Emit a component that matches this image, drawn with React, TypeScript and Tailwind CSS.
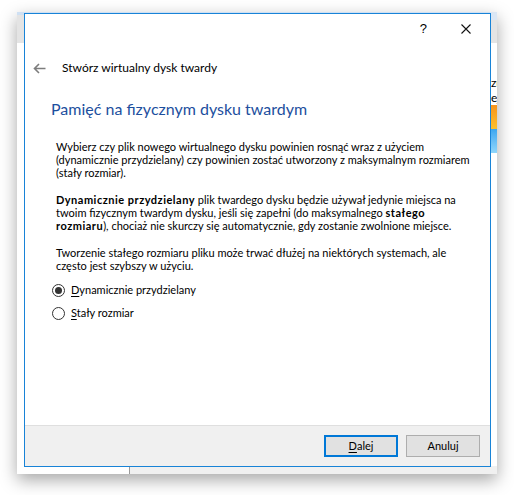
const font = "font-['Lato','Liberation_Sans',sans-serif]";

const Radio = ({ checked, label, u }: { checked?: boolean; label: string; u: string }) => (
  <div className="flex items-center h-[16px]">
    <div className="w-[13px] h-[13px] ml-[27px] rounded-full border border-[#333] bg-white flex items-center justify-center">
      {checked && <div className="w-[7px] h-[7px] rounded-full bg-[#333]" />}
    </div>
    <span className="ml-[6px] text-[11px] leading-[16px] text-black">
      <span className="underline underline-offset-2">{u}</span>
      {label}
    </span>
  </div>
);

const BackWindow = () => (
  <div className="absolute left-[17px] top-[12px] w-[480px] h-[462px] bg-white shadow-[0_6px_16px_rgba(0,0,0,0.35)] overflow-hidden">
    <div className="h-[31px] bg-[#e4e4e4] border-t-[3px] border-[#cfe0f3]" />
    {/* right strip fragments of the window behind */}
    <div className="absolute right-0 top-0 w-[7px] h-[8px] bg-[#dbe7f5]" />
    <div className="absolute right-[-6px] top-[63px] text-[12px] leading-[15px] text-black">
      <div>zu</div>
      <div>ej</div>
    </div>
    <div className="absolute right-0 top-[93px] w-[7px] h-[24px] bg-gradient-to-b from-[#f7941d] to-[#fbc02d]" />
    <div className="absolute right-0 top-[117px] w-[7px] h-[24px] bg-gradient-to-b from-[#3aa6f0] to-[#8fd6fb]" />
    <div className="absolute left-0 right-0 bottom-0 h-[8px] flex">
      <div className="w-[112px] bg-white" />
      <div className="w-px bg-[#9a9a9a]" />
      <div className="flex-1 bg-[#f0f0f0]" />
    </div>
  </div>
);

export default function App() {
  return (
    <div className={`relative w-[514px] h-[495px] bg-white overflow-hidden ${font}`}>
      <BackWindow />
      <div className="absolute left-[24px] top-[13px] w-[467px] h-[454px] border border-[#1883d7] bg-white flex flex-col">
        <div className="h-[30px] flex items-center justify-end shrink-0">
          <span className="text-[13px] text-black mr-[34px] font-['Liberation_Sans',sans-serif]">?</span>
          <svg width="10" height="10" viewBox="0 0 10 10" className="mr-[19px]">
            <path d="M0.5 0.5 L9.5 9.5 M9.5 0.5 L0.5 9.5" stroke="#111" strokeWidth="1.1" />
          </svg>
        </div>
        <div className="flex items-center h-[24px] mt-[12px]">
          <svg width="13" height="11" viewBox="0 0 13 11" className="ml-[8px]">
            <path d="M12.5 5.5 H1.5 M6 1 L1.5 5.5 L6 10" stroke="#7d7d7d" strokeWidth="1.6" fill="none" />
          </svg>
          <span className="ml-[16px] text-[12px] text-black">Stwórz wirtualny dysk twardy</span>
        </div>
        <h1 className="mt-[18px] ml-[26px] text-[16px] leading-[22px] text-[#1d4f9e]">
          Pamięć na fizycznym dysku twardym
        </h1>
        <div className="ml-[31px] text-[11px] leading-[13px] text-black whitespace-nowrap">
          <p className="mt-[20px]">
            Wybierz czy plik nowego wirtualnego dysku powinien rosnąć wraz z użyciem
            <br />
            (dynamicznie przydzielany) czy powinien zostać utworzony z maksymalnym rozmiarem
            <br />
            (stały rozmiar).
          </p>
          <p className="mt-[14px]">
            <b className="tracking-[0.5px]">Dynamicznie przydzielany</b> plik twardego dysku będzie używał jedynie miejsca na
            <br />
            twoim fizycznym twardym dysku, jeśli się zapełni (do maksymalnego <b className="tracking-[0.5px]">stałego</b>
            <br />
            <b className="tracking-[0.5px]">rozmiaru</b>), chociaż nie skurczy się automatycznie, gdy zostanie zwolnione miejsce.
          </p>
          <p className="mt-[14px]">
            Tworzenie stałego rozmiaru pliku może trwać dłużej na niektórych systemach, ale
            <br />
            często jest szybszy w użyciu.
          </p>
        </div>
        <div className="mt-[10px] flex flex-col gap-[7px]">
          <Radio checked u="D" label="ynamicznie przydzielany" />
          <Radio u="S" label="tały rozmiar" />
        </div>
        <div className="mt-auto h-[41px] border-t border-[#dfdfdf] bg-[#f0f0f0] flex items-start justify-end gap-[8px] pr-[10px] pt-[9px]">
          <button className="w-[74px] h-[22px] border-2 border-[#0078d7] bg-[#e1e1e1] text-[11px] text-black flex items-center justify-center">
            <span className="underline underline-offset-2">D</span>alej
          </button>
          <button className="w-[74px] h-[22px] border border-[#adadad] bg-[#e1e1e1] text-[11px] text-black flex items-center justify-center">
            Anuluj
          </button>
        </div>
      </div>
    </div>
  );
}
